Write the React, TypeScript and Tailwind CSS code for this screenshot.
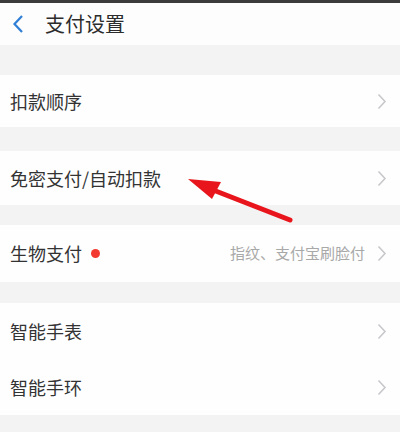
import React from "react";

const Chevron = () => (
  <svg width="10" height="17" viewBox="0 0 10 17" className="shrink-0">
    <path d="M1.5 1.5 L8 8.5 L1.5 15.5" fill="none" stroke="#c8c8cc" strokeWidth="1.6" />
  </svg>
);

const Row = ({ label, h, dot, right }: { label: string; h: string; dot?: boolean; right?: string }) => (
  <div className={`flex items-center bg-[#fefefe] pl-[10px] pr-[13px] ${h}`}>
    <span className="text-[18px] text-[#333333]">{label}</span>
    {dot && <span className="ml-[9px] h-[9px] w-[9px] rounded-full bg-[#f23a30]" />}
    <div className="flex-1" />
    {right && <span className="mr-[12px] text-[15px] text-[#a8a8a8]">{right}</span>}
    <Chevron />
  </div>
);

export default function App() {
  return (
    <div
      className="relative h-[432px] w-[400px] overflow-hidden bg-[#f3f3f3]"
      style={{ fontFamily: '"Noto Sans CJK SC", "Noto Sans", sans-serif' }}
    >
      <div className="h-[3px] bg-[#3c3c3c]" />
      <div className="flex h-[42px] items-center bg-[#fdfdfd] pl-[12px]">
        <svg width="12" height="20" viewBox="0 0 12 20">
          <path d="M10 2 L2.5 10 L10 18" fill="none" stroke="#2f7fd6" strokeWidth="2.2" />
        </svg>
        <span className="ml-[21px] text-[20px] text-[#2c2c2c]">支付设置</span>
      </div>
      <div className="h-[30px]" />
      <Row label="扣款顺序" h="h-[52px]" />
      <div className="h-[24px]" />
      <Row label="免密支付/自动扣款" h="h-[54px]" />
      <div className="h-[20px]" />
      <Row label="生物支付" h="h-[57px]" dot right="指纹、支付宝刷脸付" />
      <div className="h-[21px]" />
      <Row label="智能手表" h="h-[56px]" />
      <Row label="智能手环" h="h-[56px]" />

      <svg className="pointer-events-none absolute left-0 top-0" width="400" height="432">
        <line x1="290" y1="220" x2="208" y2="188" stroke="#e8161c" strokeWidth="5" strokeLinecap="round" />
        <polygon points="188,179 221,182 212,199" fill="#e8161c" />
      </svg>
    </div>
  );
}
